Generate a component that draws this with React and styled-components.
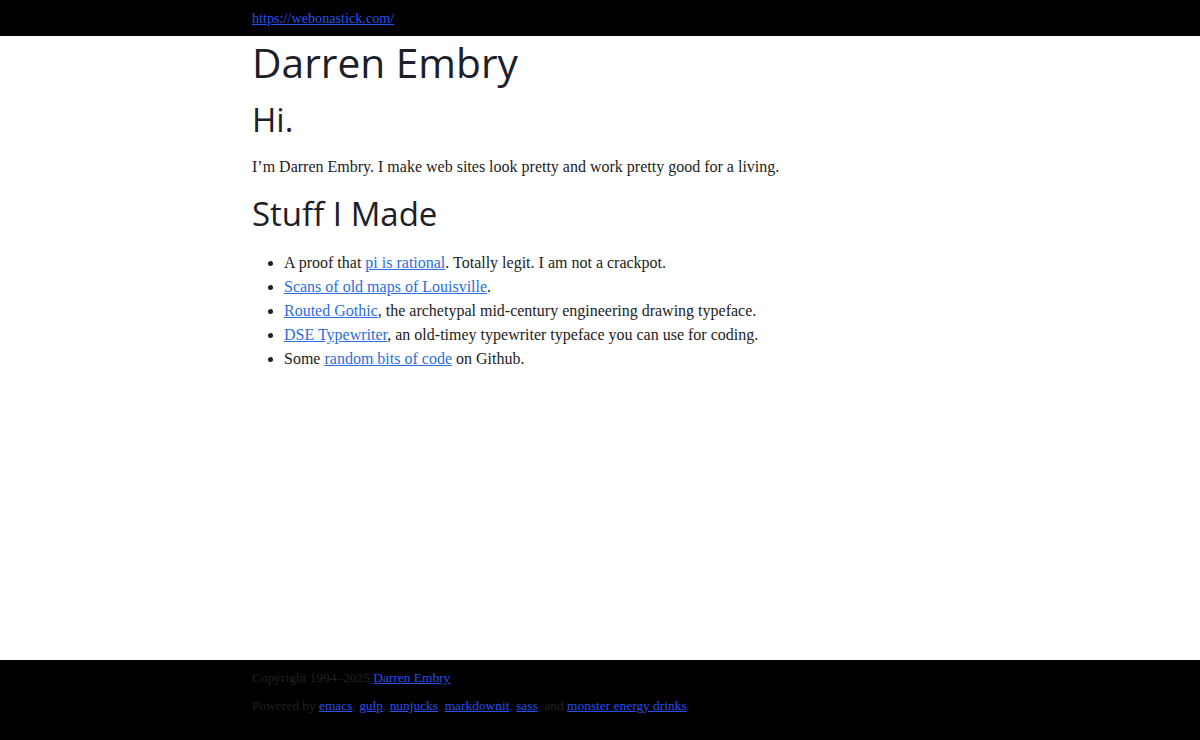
import React from "react";
import styled, { createGlobalStyle } from "styled-components";

const Global = createGlobalStyle`
  html, body { margin: 0; padding: 0; }
  body {
    background: #fff;
    color: #222;
    font-family: "Liberation Serif", "DejaVu Serif", serif;
    font-size: 16px;
    line-height: 24px;
  }
`;

const Page = styled.div`
  min-height: 100vh;
  display: flex;
  flex-direction: column;
`;

const TopBar = styled.header`
  background: #000;
  height: 36px;
  display: flex;
  align-items: center;
`;

const FootBar = styled.footer`
  background: #000;
  padding: 8px 0 24px;
`;

const Wrap = styled.div`
  width: 696px;
  margin: 0 auto;
`;

const Main = styled.main`
  flex: 1;
  padding-top: 2px;
`;

const Link = styled.a`
  color: ${(p) => (p.$dark ? "#2450f0" : "#2a6ee0")};
  text-decoration: underline;
`;

const SmallLink = styled(Link)`
  font-size: 14.2px;
  line-height: 20px;
  display: inline-block;
`;

const H1 = styled.h1`
  font-family: "Open Sans", "Noto Sans", sans-serif;
  font-weight: 400;
  font-size: 40.7px;
  line-height: 48px;
  margin: 0;
  color: #1c2028;
`;

const H2 = styled.h2`
  font-family: "Open Sans", "Noto Sans", sans-serif;
  font-weight: 400;
  font-size: 33px;
  line-height: 40px;
  margin: ${(p) => p.$m || "14px 0 0"};
  color: #1c2028;
`;

const P = styled.p`
  margin: 15px 0 0;
`;

const List = styled.ul`
  margin: 17px 0 0;
  padding-left: 32px;
`;

const Item = styled.li``;

const FootLine = styled.div`
  font-size: 13.4px;
  line-height: 20px;
  color: #222;
  margin-top: ${(p) => p.$mt || "0"};
`;

export default function App() {
  return (
    <>
      <Global />
      <Page>
        <TopBar>
          <Wrap>
            <SmallLink $dark href="#">https://webonastick.com/</SmallLink>
          </Wrap>
        </TopBar>
        <Main>
          <Wrap>
            <H1>Darren Embry</H1>
            <H2 $m="14px 0 0">Hi.</H2>
            <P>I’m Darren Embry. I make web sites look pretty and work pretty good for a living.</P>
            <H2 $m="15px 0 0">Stuff I Made</H2>
            <List>
              <Item>A proof that <Link href="#">pi is rational</Link>. Totally legit. I am not a crackpot.</Item>
              <Item><Link href="#">Scans of old maps of Louisville</Link>.</Item>
              <Item><Link href="#">Routed Gothic</Link>, the archetypal mid-century engineering drawing typeface.</Item>
              <Item><Link href="#">DSE Typewriter</Link>, an old-timey typewriter typeface you can use for coding.</Item>
              <Item>Some <Link href="#">random bits of code</Link> on Github.</Item>
            </List>
          </Wrap>
        </Main>
        <FootBar>
          <Wrap>
            <FootLine>Copyright 1994–2025 <Link $dark href="#">Darren Embry</Link></FootLine>
            <FootLine $mt="8px">
              Powered by <Link $dark href="#">emacs</Link>, <Link $dark href="#">gulp</Link>, <Link $dark href="#">nunjucks</Link>, <Link $dark href="#">markdownit</Link>, <Link $dark href="#">sass</Link>, and <Link $dark href="#">monster energy drinks</Link>.
            </FootLine>
          </Wrap>
        </FootBar>
      </Page>
    </>
  );
}
